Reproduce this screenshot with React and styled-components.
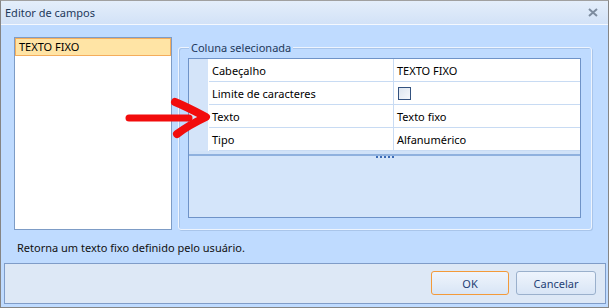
import React from 'react';
import styled, { createGlobalStyle } from 'styled-components';

const GlobalStyle = createGlobalStyle`
  html, body {
    margin: 0;
    padding: 0;
    background: #ffffff;
  }
  * {
    box-sizing: border-box;
  }
`;

const rows = [
  { name: 'Cabeçalho', value: 'TEXTO FIXO' },
  { name: 'Limite de caracteres', check: true },
  { name: 'Texto', value: 'Texto fixo' },
  { name: 'Tipo', value: 'Alfanumérico' },
];

const Window = styled.div`
  position: relative;
  width: 609px;
  height: 308px;
  display: flex;
  flex-direction: column;
  background: #bfdbff;
  border: 1px solid #858585;
  border-top-color: #a0a0a0;
  font-family: "Noto Sans", "Open Sans", sans-serif;
  font-size: 11px;
  color: #000;
  & > * {
    flex-shrink: 0;
  }
`;

const TitleBar = styled.div`
  height: 24px;
  display: flex;
  align-items: center;
  justify-content: space-between;
  padding: 0 10px 1px 4px;
  background: linear-gradient(#e4eefb, #d2e2f7);
  border-bottom: 1px solid #f4f8fe;
  color: #1e395b;
  font-size: 11px;
`;

const CloseIcon = () => (
  <svg width="10" height="9" viewBox="0 0 10 9">
    <path d="M1 1 L9 8 M9 1 L1 8" stroke="#7d8c9f" strokeWidth="2" fill="none" />
  </svg>
);

const Main = styled.div`
  display: flex;
  align-items: flex-start;
  gap: 6px;
  padding: 12px 15px 0 13px;
`;

const ListBox = styled.div`
  width: 158px;
  height: 193px;
  background: #fff;
  border: 1px solid #7d9cc6;
`;

const ListItem = styled.div`
  height: 18px;
  line-height: 16px;
  padding-left: 3px;
  background: ${p => (p.selected ? '#ffe4a5' : 'transparent')};
  border: 1px solid ${p => (p.selected ? '#f4ad5c' : 'transparent')};
`;

const GroupBox = styled.div`
  position: relative;
  margin-top: 10px;
  width: 414px;
  height: 183px;
  padding: 10px 10px 11px 9px;
  border: 1px solid #eef4fd;
  border-radius: 3px;
  box-shadow: inset 1px 1px 0 #a9c5ea, 1px 1px 0 #a9c5ea;
`;

const Legend = styled.span`
  position: absolute;
  left: 10px;
  top: -8px;
  padding: 0 2px;
  background: #bfdbff;
  color: #1e395b;
  line-height: 15px;
`;

const Grid = styled.div`
  height: 160px;
  display: flex;
  flex-direction: column;
  border: 1px solid #6f93c8;
  background: #d4e5fa;
`;

const Row = styled.div`
  display: grid;
  grid-template-columns: 20px 185px 1fr;
  height: 23px;
  flex-shrink: 0;
  background: #fff;
`;

const Indicator = styled.div`
  background: #d4e4f9;
  border-right: 1px solid #fff;
`;

const Cell = styled.div`
  display: flex;
  align-items: center;
  padding-left: 3px;
  border-bottom: 1px solid #c8dbf3;
  border-right: ${p => (p.first ? '1px solid #c8dbf3' : 'none')};
`;

const CheckBox = styled.span`
  width: 13px;
  height: 13px;
  margin-left: 1px;
  border: 1px solid #34527f;
  background: linear-gradient(135deg, #dde5ef, #f6f8fb);
`;

const Splitter = styled.div`
  height: 7px;
  flex-shrink: 0;
  display: flex;
  justify-content: center;
  align-items: flex-end;
  background: linear-gradient(#d0e2f8 0, #d0e2f8 3px, #8fb1de 3px, #8fb1de 5px, #d4e5fa 5px);
`;

const Grip = styled.span`
  width: 18px;
  height: 2px;
  margin-bottom: 0;
  background: repeating-linear-gradient(90deg, #3c6bb5 0 2px, transparent 2px 4px);
`;

const Description = styled.div`
  padding: 10px 0 0 16px;
  height: 33px;
  color: #111;
`;

const Footer = styled.div`
  margin: 0 2px 0 3px;
  height: 41px;
  display: flex;
  align-items: center;
  justify-content: flex-end;
  gap: 7px;
  padding: 0 9px 1px 0;
  background: #dde8f6;
  border: 1px solid #7f9cc8;
`;

const Button = styled.button`
  width: ${p => p.w}px;
  height: 24px;
  border-radius: 3px;
  border: 1px solid ${p => (p.focused ? '#f39a3a' : '#9ab0cc')};
  background: linear-gradient(#eef4fd 0%, #e4edf9 50%, #d8e5f6 100%);
  color: #1f3f75;
  font-family: "Noto Sans", "Open Sans", sans-serif;
  font-size: 11px;
  padding: 0;
`;

const Arrow = styled.svg`
  position: absolute;
  left: 122px;
  top: 96px;
`;

export default function App() {
  return (
    <>
      <GlobalStyle />
      <Window>
        <TitleBar>
          <span>Editor de campos</span>
          <CloseIcon />
        </TitleBar>
        <Main>
          <ListBox>
            <ListItem selected>TEXTO FIXO</ListItem>
          </ListBox>
          <GroupBox>
            <Legend>Coluna selecionada</Legend>
            <Grid>
              {rows.map(r => (
                <Row key={r.name}>
                  <Indicator />
                  <Cell first>{r.name}</Cell>
                  <Cell>{r.check ? <CheckBox /> : r.value}</Cell>
                </Row>
              ))}
              <Splitter>
                <Grip />
              </Splitter>
            </Grid>
          </GroupBox>
        </Main>
        <Description>Retorna um texto fixo definido pelo usuário.</Description>
        <Footer>
          <Button w={78} focused>OK</Button>
          <Button w={80}>Cancelar</Button>
        </Footer>
        <Arrow width="90" height="42" viewBox="0 0 90 42">
          <path d="M6 21 L66 21" stroke="#f20c0c" strokeWidth="7" strokeLinecap="round" fill="none" />
          <path d="M52 5 Q62 9 83 20 Q66 28 54 37" stroke="#f20c0c" strokeWidth="8" strokeLinecap="round" strokeLinejoin="round" fill="none" />
        </Arrow>
      </Window>
    </>
  );
}
